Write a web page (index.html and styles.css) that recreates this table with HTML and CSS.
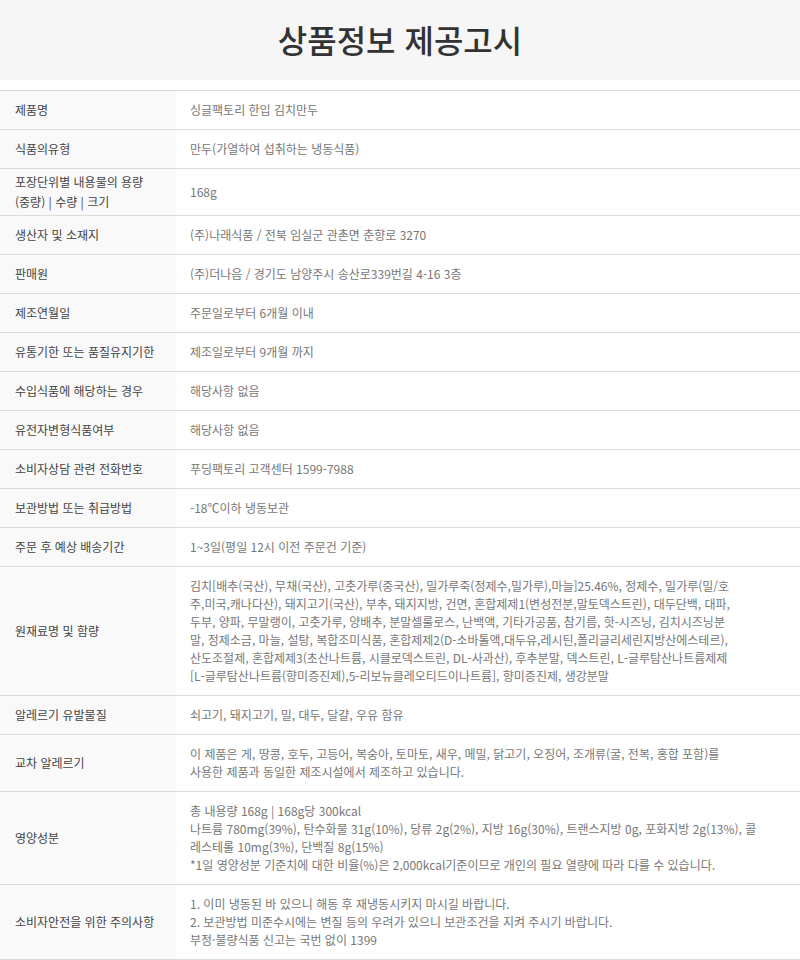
FILE: index.html
```html
<!DOCTYPE html>
<html lang="ko">
<head>
<meta charset="utf-8">
<title>상품정보 제공고시</title>
<link rel="stylesheet" href="styles.css">
</head>
<body>
<div class="notice">
  <header class="notice-head">
    <h1 class="notice-title">상품정보 제공고시</h1>
  </header>
  <table class="info">
    <colgroup><col class="col-label"><col class="col-value"></colgroup>
    <tbody>
      <tr><th>제품명</th><td>싱글팩토리 한입 김치만두</td></tr>
      <tr><th>식품의유형</th><td>만두(가열하여 섭취하는 냉동식품)</td></tr>
      <tr><th class="tight">포장단위별 내용물의 용량<br>(중량) | 수량 | 크기</th><td>168g</td></tr>
      <tr><th>생산자 및 소재지</th><td>(주)나래식품 / 전북 임실군 관촌면 춘향로 3270</td></tr>
      <tr><th>판매원</th><td>(주)더나음 / 경기도 남양주시 송산로339번길 4-16 3층</td></tr>
      <tr><th>제조연월일</th><td>주문일로부터 6개월 이내</td></tr>
      <tr><th>유통기한 또는 품질유지기한</th><td>제조일로부터 9개월 까지</td></tr>
      <tr><th>수입식품에 해당하는 경우</th><td>해당사항 없음</td></tr>
      <tr><th>유전자변형식품여부</th><td>해당사항 없음</td></tr>
      <tr><th>소비자상담 관련 전화번호</th><td>푸딩팩토리 고객센터 1599-7988</td></tr>
      <tr><th>보관방법 또는 취급방법</th><td>-18℃이하 냉동보관</td></tr>
      <tr><th>주문 후 예상 배송기간</th><td>1~3일(평일 12시 이전 주문건 기준)</td></tr>
      <tr><th>원재료명 및 함량</th><td>김치[배추(국산), 무채(국산), 고춧가루(중국산), 밀가루죽(정제수,밀가루),마늘]25.46%, 정제수, 밀가루(밀/호<br>주,미국,캐나다산), 돼지고기(국산), 부추, 돼지지방, 건면, 혼합제제1(변성전분,말토덱스트린), 대두단백, 대파,<br>두부, 양파, 무말랭이, 고춧가루, 양배추, 분말셀룰로스, 난백액, 기타가공품, 참기름, 핫-시즈닝, 김치시즈닝분<br>말, 정제소금, 마늘, 설탕, 복합조미식품, 혼합제제2(D-소바톨액,대두유,레시틴,폴리글리세린지방산에스테르),<br>산도조절제, 혼합제제3(초산나트륨, 시클로덱스트린, DL-사과산), 후추분말, 덱스트린, L-글루탐산나트륨제제<br>[L-글루탐산나트륨(향미증진제),5-리보뉴클레오티드이나트륨], 향미증진제, 생강분말</td></tr>
      <tr><th>알레르기 유발물질</th><td>쇠고기, 돼지고기, 밀, 대두, 달걀, 우유 함유</td></tr>
      <tr><th>교차 알레르기</th><td>이 제품은 게, 땅콩, 호두, 고등어, 복숭아, 토마토, 새우, 메밀, 닭고기, 오징어, 조개류(굴, 전복, 홍합 포함)를<br>사용한 제품과 동일한 제조시설에서 제조하고 있습니다.</td></tr>
      <tr><th>영양성분</th><td>총 내용량 168g | 168g당 300kcal<br>나트륨 780mg(39%), 탄수화물 31g(10%), 당류 2g(2%), 지방 16g(30%), 트랜스지방 0g, 포화지방 2g(13%), 콜<br>레스테롤 10mg(3%), 단백질 8g(15%)<br>*1일 영양성분 기준치에 대한 비율(%)은 2,000kcal기준이므로 개인의 필요 열량에 따라 다를 수 있습니다.</td></tr>
      <tr><th>소비자안전을 위한 주의사항</th><td>1. 이미 냉동된 바 있으니 해동 후 재냉동시키지 마시길 바랍니다.<br>2. 보관방법 미준수시에는 변질 등의 우려가 있으니 보관조건을 지켜 주시기 바랍니다.<br>부정·불량식품 신고는 국번 없이 1399</td></tr>
    </tbody>
  </table>
</div>
</body>
</html>
```

FILE: styles.css
```css
html, body {
  margin: 0;
  padding: 0;
  background: #ffffff;
}

body {
  font-family: "Noto Sans CJK KR", "Noto Sans", sans-serif;
  font-size: 12px;
  color: #444;
}

.notice-head {
  height: 80px;
  background: #f6f6f6;
  display: flex;
  align-items: center;
  justify-content: center;
  margin-bottom: 10px;
}

.notice-title {
  margin: 0 0 2px;
  font-size: 32px;
  font-weight: 500;
  color: #333;
  letter-spacing: 0;
  line-height: 1;
}

.info {
  width: 100%;
  border-collapse: collapse;
  table-layout: fixed;
  border-top: 1px solid #dcdcdc;
}

.col-label { width: 176px; }

.info th,
.info td {
  border-bottom: 1px solid #dcdcdc;
  padding: 10px 6px 10px 15px;
  line-height: 18px;
  vertical-align: middle;
  text-align: left;
  font-weight: 400;
  white-space: nowrap;
}

.info th {
  background: #f9f9f9;
  color: #444;
}

.info th.tight {
  padding-top: 3px;
  padding-bottom: 3px;
  line-height: 20px;
}

.info td {
  padding-left: 14px;
  color: #777;
}
```
